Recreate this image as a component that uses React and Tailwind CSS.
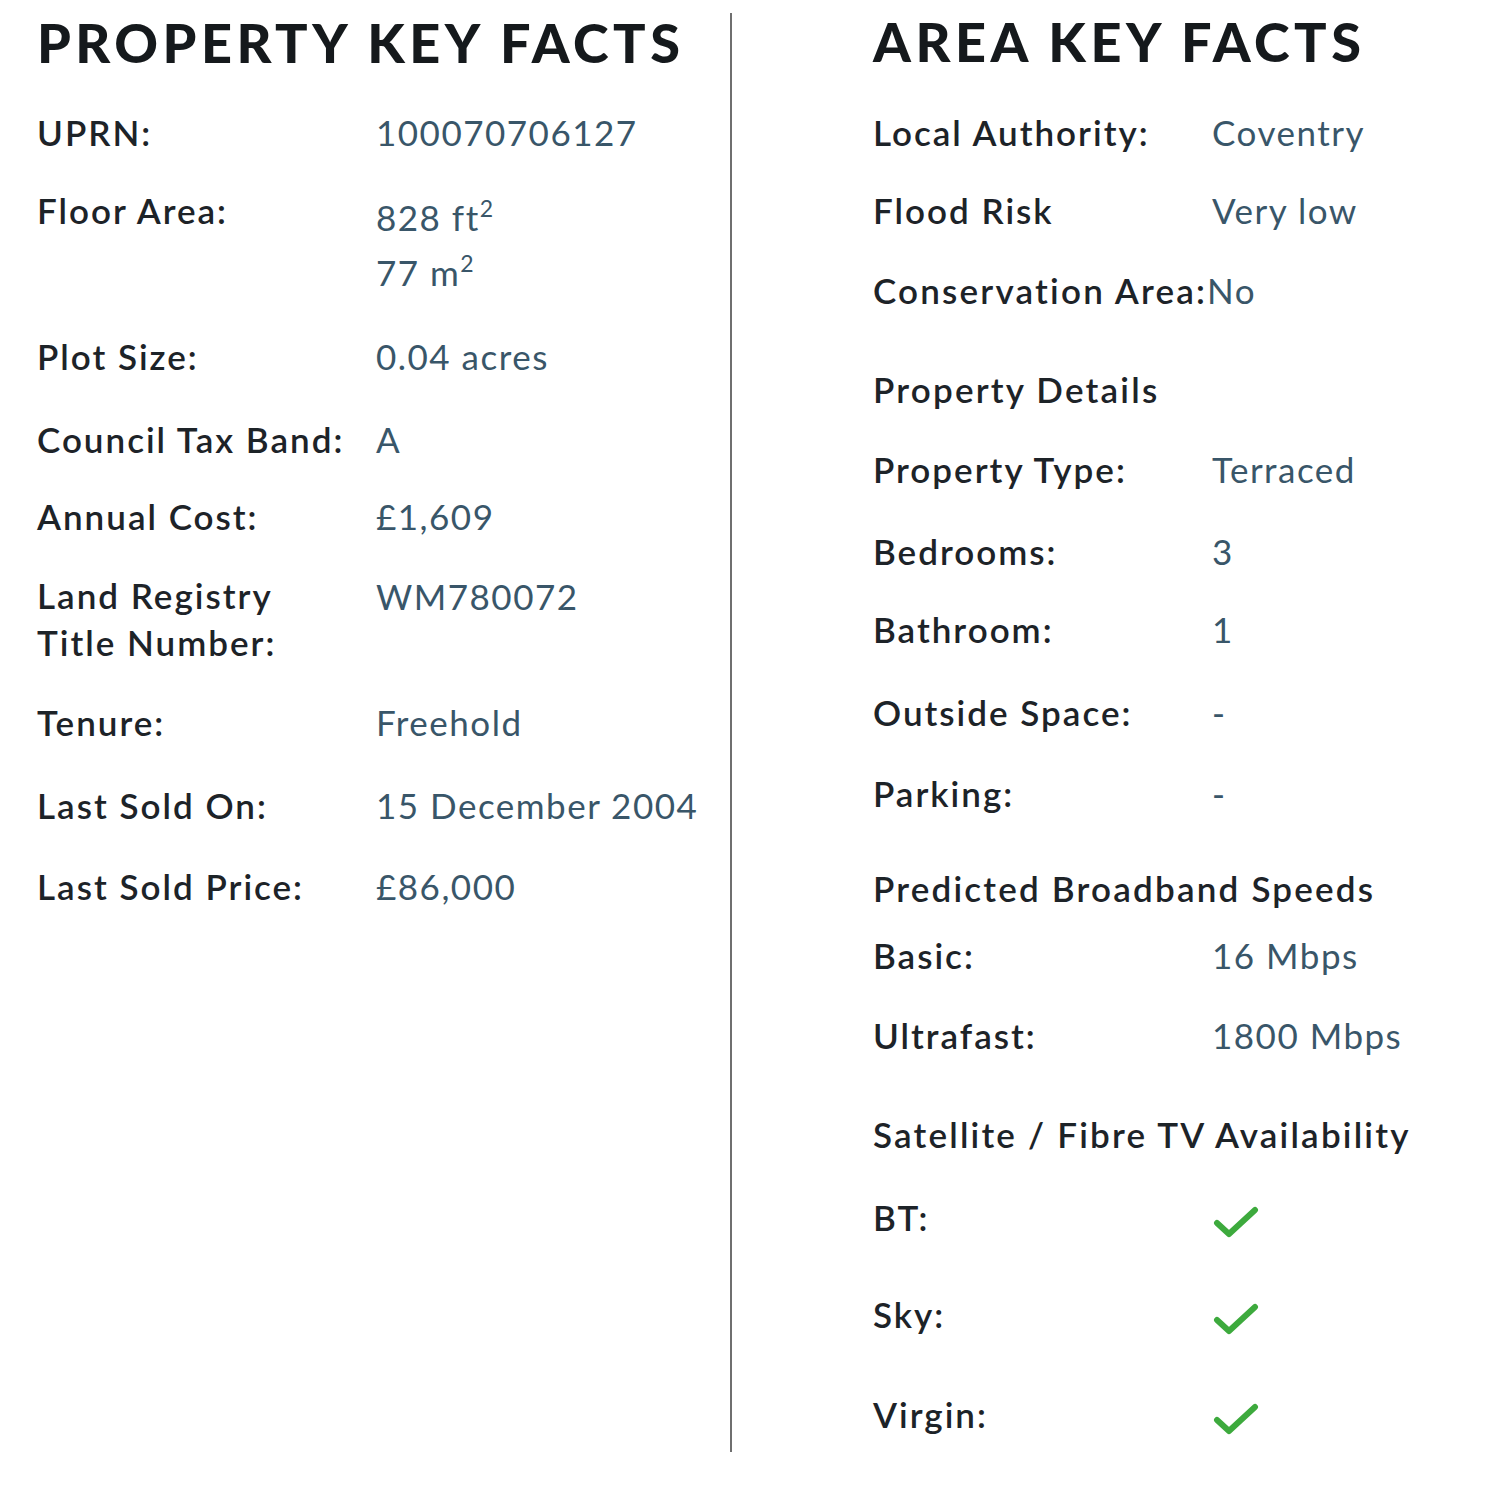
import React from "react";

const L = ({ children }) => (
  <div className="w-[339px] shrink-0 text-[#1d2328] font-semibold tracking-[2px]">{children}</div>
);
const H = ({ children }) => (
  <div className="shrink-0 text-[#1d2328] font-semibold tracking-[2.2px]">{children}</div>
);
const V = ({ children, cls = "" }) => (
  <div className={"text-[#395669] font-normal tracking-[1.5px] " + cls}>{children}</div>
);

function Check() {
  return (
    <svg width="46" height="36" viewBox="0 0 46 36" className="mt-[7px] ml-[1px]">
      <path d="M4 19 L16 30 L42 6" fill="none" stroke="#3daa3d" strokeWidth="6" strokeLinecap="round" strokeLinejoin="round" />
    </svg>
  );
}

export default function App() {
  const font = { fontFamily: "Lato, 'Noto Sans', sans-serif" };
  return (
    <div className="w-[1500px] h-[1502px] bg-white" style={font}>
      <div className="flex pt-[12px] text-[35px] leading-[40px]">
        {/* Left column */}
        <div className="w-[730px] shrink-0 pl-[37px] mt-[1px]">
          <h1 className="text-[54px] leading-[60px] font-black tracking-[4.5px] text-[#15191c] h-[99px]">
            PROPERTY KEY FACTS
          </h1>
          <div className="flex h-[78px]"><L>UPRN:</L><V>100070706127</V></div>
          <div className="flex h-[146px]">
            <L>Floor Area:</L>
            <V cls="leading-[55px]">
              <div>828 ft<sup className="text-[23px] -top-[14px] tracking-normal">2</sup></div>
              <div>77 m<sup className="text-[23px] -top-[14px] tracking-normal">2</sup></div>
            </V>
          </div>
          <div className="flex h-[83px]"><L>Plot Size:</L><V>0.04 acres</V></div>
          <div className="flex h-[77px]"><L>Council Tax Band:</L><V>A</V></div>
          <div className="flex h-[80px]"><L>Annual Cost:</L><V>£1,609</V></div>
          <div className="flex h-[126px]">
            <L><div className="leading-[47px] -mt-[4px]">Land Registry<br />Title Number:</div></L>
            <V>WM780072</V>
          </div>
          <div className="flex h-[83px]"><L>Tenure:</L><V>Freehold</V></div>
          <div className="flex h-[81px]"><L>Last Sold On:</L><V>15 December 2004</V></div>
          <div className="flex h-[40px]"><L>Last Sold Price:</L><V>£86,000</V></div>
        </div>

        {/* Divider */}
        <div className="w-[2px] shrink-0 bg-[#6f6f6f] mt-[1px]" />

        {/* Right column */}
        <div className="pl-[141px] pb-[18px]">
          <h1 className="text-[54px] leading-[60px] font-black tracking-[4.5px] text-[#15191c] h-[100px]">
            AREA KEY FACTS
          </h1>
          <div className="flex h-[78px]"><L>Local Authority:</L><V>Coventry</V></div>
          <div className="flex h-[80px]"><L>Flood Risk</L><V>Very low</V></div>
          <div className="flex h-[99px]"><H>Conservation Area:</H><V>No</V></div>
          <div className="flex h-[80px]"><H>Property Details</H></div>
          <div className="flex h-[82px]"><L>Property Type:</L><V>Terraced</V></div>
          <div className="flex h-[78px]"><L>Bedrooms:</L><V>3</V></div>
          <div className="flex h-[83px]"><L>Bathroom:</L><V>1</V></div>
          <div className="flex h-[81px]"><L>Outside Space:</L><V>-</V></div>
          <div className="flex h-[95px]"><L>Parking:</L><V>-</V></div>
          <div className="flex h-[67px]"><H>Predicted Broadband Speeds</H></div>
          <div className="flex h-[80px]"><L>Basic:</L><V>16 Mbps</V></div>
          <div className="flex h-[99px]"><L>Ultrafast:</L><V>1800 Mbps</V></div>
          <div className="flex h-[83px]"><H>Satellite / Fibre TV Availability</H></div>
          <div className="flex h-[97px]"><L>BT:</L><Check /></div>
          <div className="flex h-[100px]"><L>Sky:</L><Check /></div>
          <div className="flex h-[40px]"><L>Virgin:</L><Check /></div>
        </div>
      </div>
    </div>
  );
}
